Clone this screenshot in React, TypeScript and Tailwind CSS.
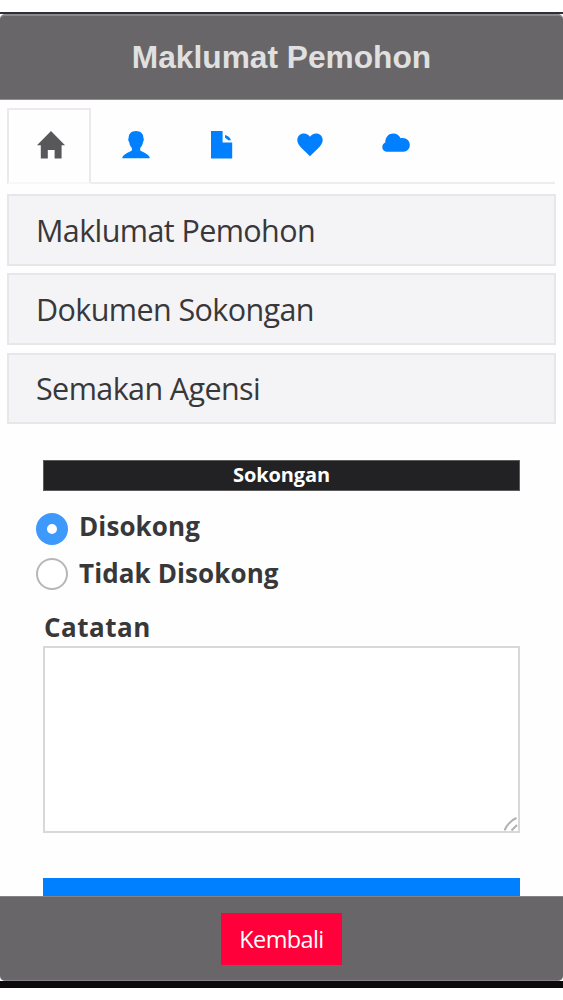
import { useState } from "react";
import clsx from "clsx";

const tabs = [
  {
    id: "home",
    width: "w-[28px]",
    offset: "pl-[3px]",
    viewBox: "0 0 28 28",
    path: "M14 0 L28 14.2 H24.6 V27.5 H17.6 V19 H10.8 V27.5 H3.8 V14.2 H0 Z",
  },
  {
    id: "user",
    width: "w-[28px]",
    offset: "pl-[2px]",
    viewBox: "0 0 28 28",
    path: "M14 0 C18.8 0 21.4 2.8 21.4 6.8 C22.2 8 21.8 10.2 21 11 C20.6 13.8 19.6 15.6 18.2 17 V19.4 C21.4 21.4 27.8 23.2 27.8 27.3 H0.2 C0.2 23.2 6.8 21.4 9.9 19.4 V17 C8.4 15.6 7.6 13.8 7.2 11 C6.2 10.2 5.9 8 6.7 6.8 C6.7 2.8 9.2 0 14 0 Z",
  },
  {
    id: "file",
    width: "w-[22px]",
    offset: "pl-0",
    viewBox: "0 0 22 28",
    path: "M0 0 H11.6 V11.4 H21.2 V27.4 H0 Z M14 4 C16.8 4.6 19 6.6 20 9.2 H17.4 L14 6.8 Z",
  },
  {
    id: "heart",
    width: "w-[26px]",
    offset: "pl-[2px]",
    viewBox: "0 0 26 28",
    path: "M13 25.2 C8.6 20.6 0.3 14.6 0.3 9.2 C0.3 5.2 3.4 2.5 6.8 2.5 C9.6 2.5 11.8 3.8 13 5.8 C14.2 3.8 16.4 2.5 19.2 2.5 C22.6 2.5 25.7 5.2 25.7 9.2 C25.7 14.6 17.4 20.6 13 25.2 Z",
  },
  {
    id: "cloud",
    width: "w-[28px]",
    offset: "pl-0",
    viewBox: "0 0 28 28",
    path: "M5.8 20.7 C2.4 20.7 0.3 18.6 0.3 15.9 C0.3 13.8 1.5 12.1 3.3 11.4 C3.2 6 6.8 2.6 11.4 2.6 C14.6 2.6 17.2 4.4 18.6 7.3 C24 6.2 27.8 9.7 27.8 14 C27.8 17.8 25.2 20.7 21.4 20.7 Z",
  },
];

const sections = [
  { title: "Maklumat Pemohon", size: "mb-[7px] h-[72px]" },
  { title: "Dokumen Sokongan", size: "mb-[8px] h-[72px]" },
  { title: "Semakan Agensi", size: "h-[71px] pb-[1px]" },
];

const options = [
  { label: "Disokong", dot: "mt-[4px]" },
  { label: "Tidak Disokong", dot: "mt-[1px]" },
];

const App = () => {
  const [active, setActive] = useState("home");
  const [choice, setChoice] = useState("Disokong");

  return (
    <div className="h-[1000px] w-[563px] overflow-hidden bg-white pt-[12px] font-['Open_Sans','Noto_Sans',sans-serif] text-[#38383a]">
      <div className="flex h-[976px] flex-col border-t-2 border-b-[7px] border-t-[#302f36] border-b-[#0c0b0c] bg-white">
        <header className="flex h-[86px] shrink-0 items-center justify-center rounded-t-[5px] border-t-2 border-b border-t-[#8b898c] border-b-[#8f8d90] bg-[#686668]">
          <h1 className="font-['Liberation_Sans',Arial,sans-serif] text-[31.7px] font-bold text-[#e0e0e0]">
            Maklumat Pemohon
          </h1>
        </header>

        <main className="flex h-[796px] shrink-0 flex-col overflow-hidden bg-[#fefefe] px-[7px] pt-[8px]">
          <nav className="flex h-[76px] w-[548px] shrink-0">
            {tabs.map((tab) => (
              <button
                key={tab.id}
                onClick={() => setActive(tab.id)}
                className={clsx(
                  "flex items-start justify-center",
                  tab.offset,
                  tab.id === "home" ? "w-[84px]" : "w-[87px]",
                  active === tab.id
                    ? "border-2 border-[#ebe9ec] border-b-[#f8f6f8] pt-[21px] text-[#58575a]"
                    : "border-b-2 border-[#eeecef] pt-[23px] text-[#0080ff]"
                )}
              >
                <svg
                  viewBox={tab.viewBox}
                  fill="currentColor"
                  className={clsx("h-[28px]", tab.width)}
                >
                  <path d={tab.path} />
                </svg>
              </button>
            ))}
            <div className="flex-1 border-b-2 border-[#eeecef]" />
          </nav>

          <div className="mt-[10px] w-[549px] shrink-0">
            {sections.map((section) => (
              <div
                key={section.title}
                className={clsx(
                  "flex items-center border-2 border-[#e7e6e9] bg-[#f4f3f6] pl-[27px] text-[30.5px] leading-[42px] tracking-[-0.6px]",
                  section.size
                )}
              >
                {section.title}
              </div>
            ))}
          </div>

          <form className="mr-[36px] ml-[36px] flex shrink-0 flex-col pt-[36px]">
            <h2 className="h-[31px] border border-[#5c5b5e] bg-[#222124] text-center text-[20px] leading-[28px] font-bold tracking-[-0.1px] text-white">
              Sokongan
            </h2>
            <div className="mt-[12px] -ml-[7px]">
              {options.map((option) => (
                <label
                  key={option.label}
                  className="flex h-[47px] items-center text-[26px] font-bold tracking-[0.1px]"
                >
                  <input
                    type="radio"
                    name="sokongan"
                    className="peer sr-only"
                    checked={choice === option.label}
                    onChange={() => setChoice(option.label)}
                  />
                  <span
                    className={clsx(
                      "mr-[11px] size-[32px] shrink-0 rounded-full border-2 border-[#b7b6b9] bg-white peer-checked:border-[11px] peer-checked:border-[#3d99fc]",
                      option.dot
                    )}
                  />
                  {option.label}
                </label>
              ))}
            </div>
            <label
              htmlFor="catatan"
              className="mt-[13px] h-[36px] pl-[1px] text-[26px] leading-[34px] font-bold tracking-[0.5px]"
            >
              Catatan
            </label>
            <div className="relative h-[187px]">
              <textarea
                id="catatan"
                className="block h-full w-full resize-none border-2 border-[#d9d7da] bg-white p-2 text-[24px] outline-none"
              />
              <svg
                viewBox="0 0 14 14"
                className="absolute right-[2px] bottom-[2px] size-[14px]"
                fill="none"
                stroke="#b2b0b3"
                strokeWidth="2"
              >
                <path d="M0.5 13.5 C2 9 7 3 12.5 1 M7.5 13.5 L13 8" />
              </svg>
            </div>
            <button type="button" className="mt-[45px] h-[60px] bg-[#0080ff]" aria-label="Hantar" />
          </form>
        </main>

        <footer className="flex h-[85px] shrink-0 items-center justify-center rounded-b-[5px] border-t border-b border-[#858386] bg-[#686668]">
          <button className="h-[52px] w-[121px] bg-[#ff003b] text-[23.5px] leading-[52px] font-medium tracking-[-0.6px] text-white">
            Kembali
          </button>
        </footer>
      </div>
    </div>
  );
};

export default App;
